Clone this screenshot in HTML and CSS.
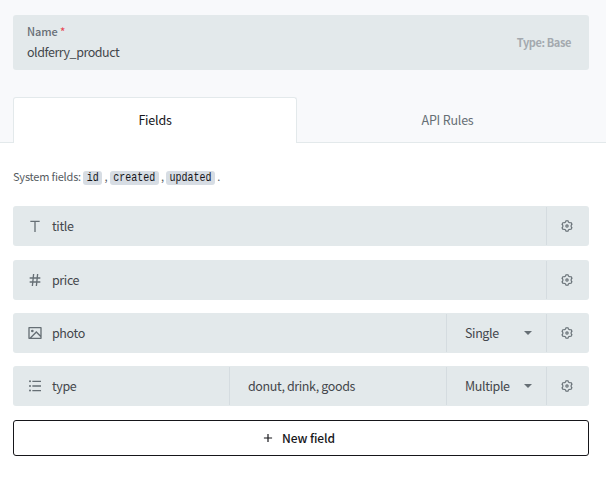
FILE: index.html
```html
<!DOCTYPE html>
<html lang="en">
<head>
<meta charset="utf-8">
<title>Collection</title>
<link rel="stylesheet" href="styles.css">
</head>
<body>
<svg class="sprite" aria-hidden="true">
  <symbol id="gear" viewBox="0 0 24 24"><path d="M3.34 17a10.018 10.018 0 0 1-.978-2.326 3 3 0 0 0 .002-5.347A9.99 9.99 0 0 1 4.865 4.99a3 3 0 0 0 4.631-2.674 9.99 9.99 0 0 1 5.007.002 3 3 0 0 0 4.632 2.672c.579.59 1.093 1.261 1.525 2.01.433.749.757 1.53.978 2.326a3 3 0 0 0-.002 5.347 9.99 9.99 0 0 1-2.501 4.337 3 3 0 0 0-4.631 2.674 9.99 9.99 0 0 1-5.007-.002 3 3 0 0 0-4.632-2.672A10.018 10.018 0 0 1 3.34 17zm5.66.196a4.993 4.993 0 0 1 2.25 2.77c.499.047 1 .048 1.499.001A4.993 4.993 0 0 1 15 17.197a4.993 4.993 0 0 1 3.525-.565c.29-.408.54-.843.748-1.298A4.993 4.993 0 0 1 18 12c0-1.26.47-2.437 1.273-3.334a8.126 8.126 0 0 0-.75-1.298A4.993 4.993 0 0 1 15 6.804a4.993 4.993 0 0 1-2.25-2.77c-.499-.047-1-.048-1.499-.001A4.993 4.993 0 0 1 9 6.803a4.993 4.993 0 0 1-3.525.565 7.99 7.99 0 0 0-.748 1.298A4.993 4.993 0 0 1 6 12c0 1.26-.47 2.437-1.273 3.334a8.126 8.126 0 0 0 .75 1.298A4.993 4.993 0 0 1 9 17.196zM12 15a3 3 0 1 1 0-6 3 3 0 0 1 0 6zm0-2a1 1 0 1 0 0-2 1 1 0 0 0 0 2z"/></symbol>
</svg>
<header class="header">
  <div class="name-field">
    <div class="name-main">
      <label class="label">Name <span class="required">*</span></label>
      <div class="value">oldferry_product</div>
    </div>
    <div class="type">Type: Base</div>
  </div>
  <nav class="tabs">
    <div class="tab active">Fields</div>
    <div class="tab">API Rules</div>
  </nav>
</header>
<main class="content">
  <p class="system">System fields: <code><span>id</span></code> , <code><span>created</span></code> , <code><span>updated</span></code> .</p>
  <div class="row">
    <div class="cell name"><svg class="icon" viewBox="0 0 24 24"><path d="M13 6v15h-2V6H5V4h14v2h-6z"/></svg>title</div>
    <div class="cell settings"><svg class="gear"><use href="#gear"/></svg></div>
  </div>
  <div class="row gap-small">
    <div class="cell name"><svg class="icon" viewBox="0 0 24 24"><path d="M7.784 14l.42-4H4V8h4.415l.525-5h2.011l-.525 5h3.989l.525-5h2.011l-.525 5H20v2h-3.784l-.42 4H20v2h-4.415l-.525 5h-2.011l.525-5H9.585l-.525 5H7.049l.525-5H4v-2h3.784zm2.011 0h3.99l.42-4h-3.99l-.42 4z"/></svg>price</div>
    <div class="cell settings"><svg class="gear"><use href="#gear"/></svg></div>
  </div>
  <div class="row gap-small">
    <div class="cell name"><svg class="icon" viewBox="0 0 24 24"><path d="M4.828 21l-.02.02-.021-.02H2.992A.993.993 0 0 1 2 20.007V3.993A1 1 0 0 1 2.992 3h18.016c.548 0 .992.445.992.993v16.014a1 1 0 0 1-.992.993H4.828zM20 15V5H4v14L14 9l6 6zm0 2.828l-6-6L6.828 19H20v-1.172zM8 11a2 2 0 1 1 0-4 2 2 0 0 1 0 4z"/></svg>photo</div>
    <div class="cell select">Single<i class="caret"></i></div>
    <div class="cell settings"><svg class="gear"><use href="#gear"/></svg></div>
  </div>
  <div class="row">
    <div class="cell name"><svg class="icon" viewBox="0 0 24 24"><path d="M8 4h13v2H8V4zM4.5 6.5a1.5 1.5 0 1 1 0-3 1.5 1.5 0 0 1 0 3zm0 7a1.5 1.5 0 1 1 0-3 1.5 1.5 0 0 1 0 3zm0 6.9a1.5 1.5 0 1 1 0-3 1.5 1.5 0 0 1 0 3zM8 11h13v2H8v-2zm0 7h13v2H8v-2z"/></svg>type</div>
    <div class="cell options">donut, drink, goods</div>
    <div class="cell select">Multiple<i class="caret"></i></div>
    <div class="cell settings"><svg class="gear"><use href="#gear"/></svg></div>
  </div>
  <div class="new-field"><svg class="plus" viewBox="0 0 24 24"><path d="M11 11V5h2v6h6v2h-6v6h-2v-6H5v-2h6z"/></svg>New field</div>
</main>
</body>
</html>
```
FILE: styles.css
```css
* { box-sizing: border-box; }
body {
  margin: 0;
  background: #fff;
  color: #43474c;
  font: 12.5px/20px "Noto Sans CJK SC", "Noto Sans", sans-serif;
}
.sprite { display: none; }
.header {
  height: 143px;
  padding: 15px 17px 0 13px;
  background: #f8f9fb;
  border-bottom: 1px solid #e3e9eb;
}
.name-field {
  display: flex;
  align-items: center;
  justify-content: space-between;
  height: 55px;
  padding: 0 18px 0 14px;
  background: #e3e9eb;
  border-radius: 3px;
}
.name-main { padding-bottom: 2px; }
.label {
  display: block;
  font-size: 11px;
  line-height: 20px;
  font-weight: 500;
  letter-spacing: -.1px;
  color: #686f76;
}
.required { color: #e84855; }
.value { line-height: 22px; letter-spacing: -.46px; }
.type { padding-bottom: 2px; font-size: 11px; font-weight: 700; letter-spacing: -.4px; color: #a4a9af; }
.tabs { display: flex; margin-top: 27px; letter-spacing: -.2px; }
.tab {
  flex: 0 0 284px;
  height: 46px;
  line-height: 46px;
  text-align: center;
  color: #666f75;
}
.tab + .tab { flex: 1; padding-left: 9px; }
.tab.active {
  line-height: 44px;
  color: #16161a;
  background: #fff;
  border: 1px solid #e3e9eb;
  border-bottom: 0;
  border-radius: 3px 3px 0 0;
}
.content { padding: 23px 17px 0 13px; }
.system { height: 20px; margin: 0 0 20px; font-size: 11px; letter-spacing: -.2px; color: #555b61; white-space: nowrap; }
code {
  display: inline-block;
  height: 14px;
  padding: 0 3.5px;
  line-height: 14px;
  letter-spacing: 0;
  vertical-align: 1px;
  font-family: "Liberation Mono", monospace;
  font-size: 10px;
  color: #16161a;
  background: #d7dde4;
  border-radius: 3px;
}
code span { display: inline-block; transform: scaleY(1.3); }
.row {
  display: flex;
  height: 40px;
  margin-bottom: 14px;
  background: #e3e9eb;
  border-radius: 3px;
  letter-spacing: -.38px;
}
.row.gap-small { margin-bottom: 13px; }
.cell { display: flex; align-items: center; margin: 1px 0; }
.cell + .cell { border-left: 1px solid #d5dce0; }
.name { flex: 1; padding-left: 14px; }
.icon { width: 16px; height: 16px; margin-right: 9px; fill: #666f75; }
.options { width: 217px; padding-left: 18px; }
.select { width: 100px; padding: 0 14px 0 18px; justify-content: space-between; }
.caret { border: 4px solid transparent; border-top-color: #666f75; border-bottom: 0; }
.settings { width: 43px; justify-content: center; padding: 0 2px 1px 0; }
.gear { width: 14px; height: 14px; fill: #666f75; }
.new-field {
  display: flex;
  align-items: center;
  justify-content: center;
  height: 36px;
  padding: 0 6px 1px 0;
  border: 1px solid #16161a;
  border-radius: 3px;
  color: #16161a;
  font-size: 12px;
  font-weight: 500;
  letter-spacing: -.1px;
}
.plus { width: 14px; height: 14px; margin-right: 7px; fill: #16161a; }
```
